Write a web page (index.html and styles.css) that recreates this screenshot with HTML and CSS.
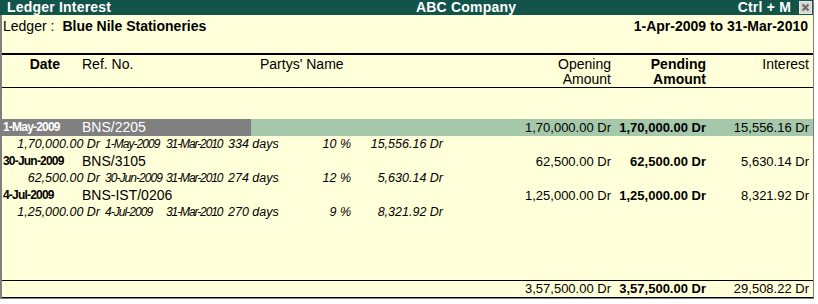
FILE: index.html
```html
<!DOCTYPE html>
<html>
<head>
<meta charset="utf-8">
<link rel="stylesheet" href="styles.css">
</head>
<body>
<div class="window">
  <div class="titlebar">
    <span class="t-left">Ledger Interest</span>
    <span class="t-center">ABC Company</span>
    <span class="t-right">Ctrl + M</span>
    <span class="close"><svg width="11" height="11" viewBox="0 0 11 11"><path d="M2.5 2.5 L8.5 8.5 M8.5 2.5 L2.5 8.5" stroke="#6b6b6b" stroke-width="2"/></svg></span>
  </div>
  <div class="info">
    <div class="ledger"><span class="lbl">Ledger :</span><b>Blue Nile Stationeries</b></div>
    <div class="period">1-Apr-2009 to 31-Mar-2010</div>
  </div>
  <div class="head">
    <div class="c-date hb">Date</div>
    <div class="c-ref">Ref. No.</div>
    <div class="c-party">Partys' Name</div>
    <div class="c-num">Opening<br>Amount</div>
    <div class="c-num hb">Pending<br>Amount</div>
    <div class="c-num">Interest</div>
  </div>
  <div class="body">
    <div class="row sel">
      <div class="c-date d">1-May-2009</div>
      <div class="c-ref">BNS/2205</div>
      <div class="c-party"></div>
      <div class="c-num">1,70,000.00 Dr</div>
      <div class="c-num b">1,70,000.00 Dr</div>
      <div class="c-num">15,556.16 Dr</div>
    </div>
    <div class="sub">
      <div class="s-amt">1,70,000.00 Dr</div>
      <div class="s-from">1-May-2009</div>
      <div class="s-to">31-Mar-2010</div>
      <div class="s-days">334 days</div>
      <div class="s-rate">10 %</div>
      <div class="s-int">15,556.16 Dr</div>
    </div>
    <div class="row">
      <div class="c-date d">30-Jun-2009</div>
      <div class="c-ref">BNS/3105</div>
      <div class="c-party"></div>
      <div class="c-num">62,500.00 Dr</div>
      <div class="c-num b">62,500.00 Dr</div>
      <div class="c-num">5,630.14 Dr</div>
    </div>
    <div class="sub">
      <div class="s-amt">62,500.00 Dr</div>
      <div class="s-from">30-Jun-2009</div>
      <div class="s-to">31-Mar-2010</div>
      <div class="s-days">274 days</div>
      <div class="s-rate">12 %</div>
      <div class="s-int">5,630.14 Dr</div>
    </div>
    <div class="row">
      <div class="c-date d">4-Jul-2009</div>
      <div class="c-ref">BNS-IST/0206</div>
      <div class="c-party"></div>
      <div class="c-num">1,25,000.00 Dr</div>
      <div class="c-num b">1,25,000.00 Dr</div>
      <div class="c-num">8,321.92 Dr</div>
    </div>
    <div class="sub">
      <div class="s-amt">1,25,000.00 Dr</div>
      <div class="s-from">4-Jul-2009</div>
      <div class="s-to">31-Mar-2010</div>
      <div class="s-days">270 days</div>
      <div class="s-rate">9 %</div>
      <div class="s-int">8,321.92 Dr</div>
    </div>
  </div>
  <div class="total">
    <div class="c-date"></div>
    <div class="c-ref"></div>
    <div class="c-party"></div>
    <div class="c-num">3,57,500.00 Dr</div>
    <div class="c-num b">3,57,500.00 Dr</div>
    <div class="c-num">29,508.22 Dr</div>
  </div>
</div>
</body>
</html>
```
FILE: styles.css
```css
* { box-sizing: border-box; }
html, body { margin: 0; padding: 0; background: #ffffff; }
body {
  font-family: "Liberation Sans", Arial, sans-serif;
  color: #000;
  width: 818px;
  height: 304px;
  overflow: hidden;
}
.window {
  width: 814px;
  height: 299px;
  background: #ffffd9;
  border-left: 2px solid #808080;
  border-right: 1px solid #808080;
  border-bottom: 1px solid #808080;
  display: flex;
  flex-direction: column;
}
.titlebar {
  height: 15px;
  background: #13544a;
  color: #fff;
  font-weight: bold;
  font-size: 14px;
  line-height: 15px;
  display: flex;
  align-items: center;
  margin-left: -2px;
  padding-left: 7px;
  letter-spacing: 0.2px;
}
.t-left { width: 409px; }
.t-center { flex: 1; }
.t-right { margin-right: 8px; }
.close {
  width: 13px;
  height: 13px;
  background: #d8d8d0;
  border: 1px solid #e8e8e8;
  display: flex;
  align-items: center;
  justify-content: center;
  margin-right: 1px;
}
.info {
  height: 38px;
  display: flex;
  justify-content: space-between;
  padding: 3px 5px 0 1px;
  font-size: 14px;
  line-height: 16px;
}
.lbl { margin-right: 8px; }
.info b, .period { font-weight: bold; }
.head, .row, .total {
  display: grid;
  grid-template-columns: 80px 178px 256px 95px 95px 103px;
  padding-right: 4px;
}
.head {
  border-top: 2px solid #000;
  border-bottom: 1px solid #000;
  height: 35px;
  padding-top: 2px;
  font-size: 14px;
  line-height: 15px;
}
.head .c-date { text-align: right; padding-right: 22px; }
.hb { font-weight: bold; }
.c-num { text-align: right; white-space: nowrap; }
.body {
  flex: 1;
  padding-top: 31px;
  border-bottom: 1px solid #000;
}
.row {
  height: 17px;
  line-height: 17px;
  font-size: 13px;
}
.row .c-ref { font-size: 14px; }
.row .c-date { padding-left: 1px; }
.d {
  font-weight: bold;
  font-size: 12px;
  letter-spacing: -0.8px;
  white-space: nowrap;
}
.b { font-weight: bold; }
.sel {
  background: linear-gradient(to right, #808080 249px, #a6c8aa 249px);
}
.sel .c-date, .sel .c-ref { color: #ffffff; }
.sub {
  display: grid;
  grid-template-columns: 98px 64px 62px 64px 61px 92px;
  height: 17px;
  line-height: 17px;
  font-size: 12.5px;
  font-style: italic;
  white-space: nowrap;
}
.s-amt { text-align: right; }
.s-from { padding-left: 5px; font-size: 12px; letter-spacing: -0.95px; }
.s-to { padding-left: 2px; font-size: 12px; letter-spacing: -1.1px; }
.s-days { padding-left: 2px; }
.s-rate, .s-int { text-align: right; }
.total {
  height: 17px;
  line-height: 16px;
  font-size: 13px;
  border-bottom: 1px solid #000;
}
```
